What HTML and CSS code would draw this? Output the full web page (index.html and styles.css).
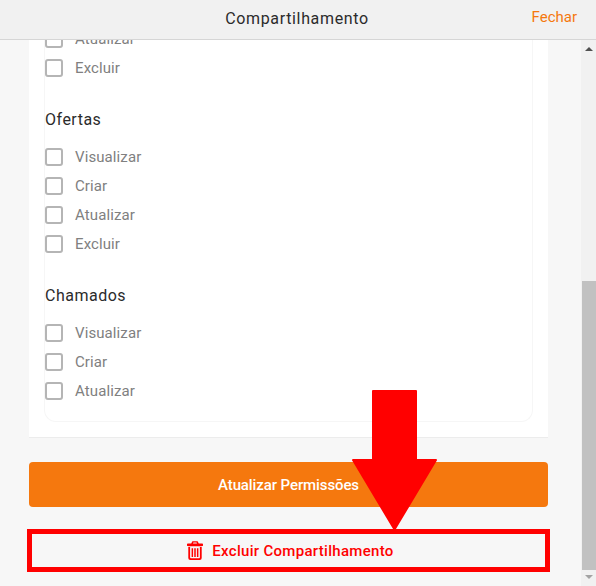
FILE: index.html
```html
<!DOCTYPE html>
<html lang="pt-BR">
<head>
  <meta charset="UTF-8" />
  <title>Compartilhamento</title>
  <link rel="stylesheet" href="styles.css">
</head>
<body>

  <header class="modal-header">
    <h1>Compartilhamento</h1>
    <a href="#" class="close-link">Fechar</a>
  </header>

  <div class="modal-main">
    <section class="modal-content">
      <div class="outer-card">
        <div class="inner-card">

          <div class="perm-group first">
            <label class="perm-row"><span class="box"></span>Atualizar</label>
            <label class="perm-row"><span class="box"></span>Excluir</label>
          </div>

          <div class="perm-group">
            <h2>Ofertas</h2>
            <label class="perm-row"><span class="box"></span>Visualizar</label>
            <label class="perm-row"><span class="box"></span>Criar</label>
            <label class="perm-row"><span class="box"></span>Atualizar</label>
            <label class="perm-row"><span class="box"></span>Excluir</label>
          </div>

          <div class="perm-group">
            <h2>Chamados</h2>
            <label class="perm-row"><span class="box"></span>Visualizar</label>
            <label class="perm-row"><span class="box"></span>Criar</label>
            <label class="perm-row"><span class="box"></span>Atualizar</label>
          </div>

        </div>
      </div>

      <a href="#" class="btn-update">Atualizar Permissões</a>

      <a href="#" class="btn-delete">
        <svg class="trash" viewBox="0 0 16 19" width="16" height="19">
          <path fill="#f00" d="M5.400 0.200h5.200l1.200 2.200H15.200a0.800 0.800 0 0 1 0.800 0.800v1.300a0.400 0.400 0 0 1-0.400 0.400H0.400a0.400 0.400 0 0 1-0.400-0.400v-1.300a0.800 0.800 0 0 1 0.800-0.800h3.400zM6.400 1.600l-0.400 0.800h4l-0.400-0.800z"/>
          <path fill="#f00" d="M1.300 5.800h13.400V17a2 2 0 0 1-2 2H3.300a2 2 0 0 1-2-2zM3.100 6V16.400a0.800 0.800 0 0 0 0.800 0.800h8.200a0.800 0.800 0 0 0 0.800-0.800V6z"/>
          <path fill="#f00" d="M4.600 7.200h1.500v8.800H4.600zM7.250 7.200h1.500v8.800H7.250zM9.900 7.200h1.500v8.800H9.900z"/>
        </svg>
        Excluir Compartilhamento
      </a>
    </section>

    <div class="scrollbar">
      <span class="arrow-up"></span>
      <div class="scroll-track"><div class="scroll-thumb"></div></div>
      <span class="arrow-down"></span>
    </div>
  </div>

  <!-- red arrow pointing at the delete button -->
  <svg class="callout" viewBox="0 0 87 142" width="87" height="142">
    <path fill="#f00" stroke="#f00" stroke-width="2" stroke-linejoin="round" d="M21 1H64V70H84L42.500 139.500L1 70H21Z"/>
  </svg>

</body>
</html>
```

FILE: styles.css
```css
* {
  box-sizing: border-box;
}

body {
  margin: 0;
  width: 596px;
  height: 586px;
  overflow: hidden;
  display: flex;
  flex-direction: column;
  position: relative;
  background: #f7f7f7;
  font-family: 'Roboto', sans-serif;
  font-size: 15px;
  color: #333;
}

.modal-header {
  height: 40px;
  flex-shrink: 0;
  display: flex;
  align-items: center;
  justify-content: center;
  position: relative;
  background: #f1f1f1;
  border-bottom: 1px solid #d6d6d6;
  padding-bottom: 2px;
}

.modal-header h1 {
  margin: 0 2px 0 0;
  font-size: 16px;
  font-weight: 400;
  letter-spacing: 0.65px;
  color: #2b2b2b;
}

.close-link {
  position: absolute;
  right: 19px;
  top: 8px;
  font-size: 15px;
  color: #f5780e;
  text-decoration: none;
}

.modal-main {
  flex: 1;
  min-height: 0;
  display: flex;
}

.modal-content {
  flex: 1;
  min-width: 0;
  overflow: hidden;
  display: flex;
  flex-direction: column;
  justify-content: flex-end;
  padding: 0 33px 14px 29px;
}

.outer-card {
  flex-shrink: 0;
  background: #fff;
  padding: 0 16px 15px;
  border-bottom: 1px solid #ececec;
}

.inner-card {
  padding-bottom: 21px;
  border: 1px solid #f6f6f6;
  border-top: 0;
  border-radius: 0 0 12px 12px;
  margin: 0 -1px;
}

.perm-group {
  margin-top: 32px;
}

.perm-group.first {
  margin-top: 0;
}

.perm-group h2 {
  margin: 0 0 19px;
  height: 20px;
  line-height: 22px;
  font-size: 16px;
  font-weight: 400;
  letter-spacing: 0.5px;
  color: #2b2b2b;
}

.perm-row {
  display: flex;
  align-items: center;
  height: 18px;
  margin-top: 11px;
  font-size: 15px;
  letter-spacing: 0.1px;
  color: #808080;
}

.perm-group h2 + .perm-row,
.perm-group.first .perm-row:first-child {
  margin-top: 0;
}

.box {
  width: 18px;
  height: 18px;
  margin-right: 12px;
  background: #fff;
  border: 2px solid #b5b5b5;
  border-radius: 3px;
  flex-shrink: 0;
}

.btn-update {
  flex-shrink: 0;
  height: 45px;
  margin-top: 24px;
  display: flex;
  align-items: center;
  justify-content: center;
  background: #f5780e;
  border-radius: 4px;
  color: #fff;
  font-size: 15px;
  font-weight: 500;
  letter-spacing: -0.1px;
  text-decoration: none;
}

.btn-delete {
  flex-shrink: 0;
  height: 43px;
  margin: 22px -2px 0;
  display: flex;
  align-items: center;
  justify-content: center;
  gap: 9px;
  padding-left: 4px;
  border: 5px solid #f00;
  color: #f00;
  font-size: 15px;
  font-weight: 500;
  letter-spacing: 0.3px;
  text-decoration: none;
}

.scrollbar {
  width: 15px;
  flex-shrink: 0;
  display: flex;
  flex-direction: column;
  align-items: center;
  background: #f1f1f1;
}

.arrow-up,
.arrow-down {
  width: 0;
  height: 0;
  flex-shrink: 0;
  border-left: 4px solid transparent;
  border-right: 4px solid transparent;
}

.arrow-up {
  margin: 7px 0 4px;
  border-bottom: 4px solid #505050;
}

.arrow-down {
  margin: 5px 0 7px;
  border-top: 4px solid #a3a3a3;
}

.scroll-track {
  flex: 1;
  width: 100%;
  display: flex;
  flex-direction: column;
  justify-content: flex-end;
  padding-left: 1px;
}

.scroll-thumb {
  height: 289px;
  background: #c1c1c1;
}

.callout {
  position: absolute;
  left: 352px;
  top: 390px;
}
```
